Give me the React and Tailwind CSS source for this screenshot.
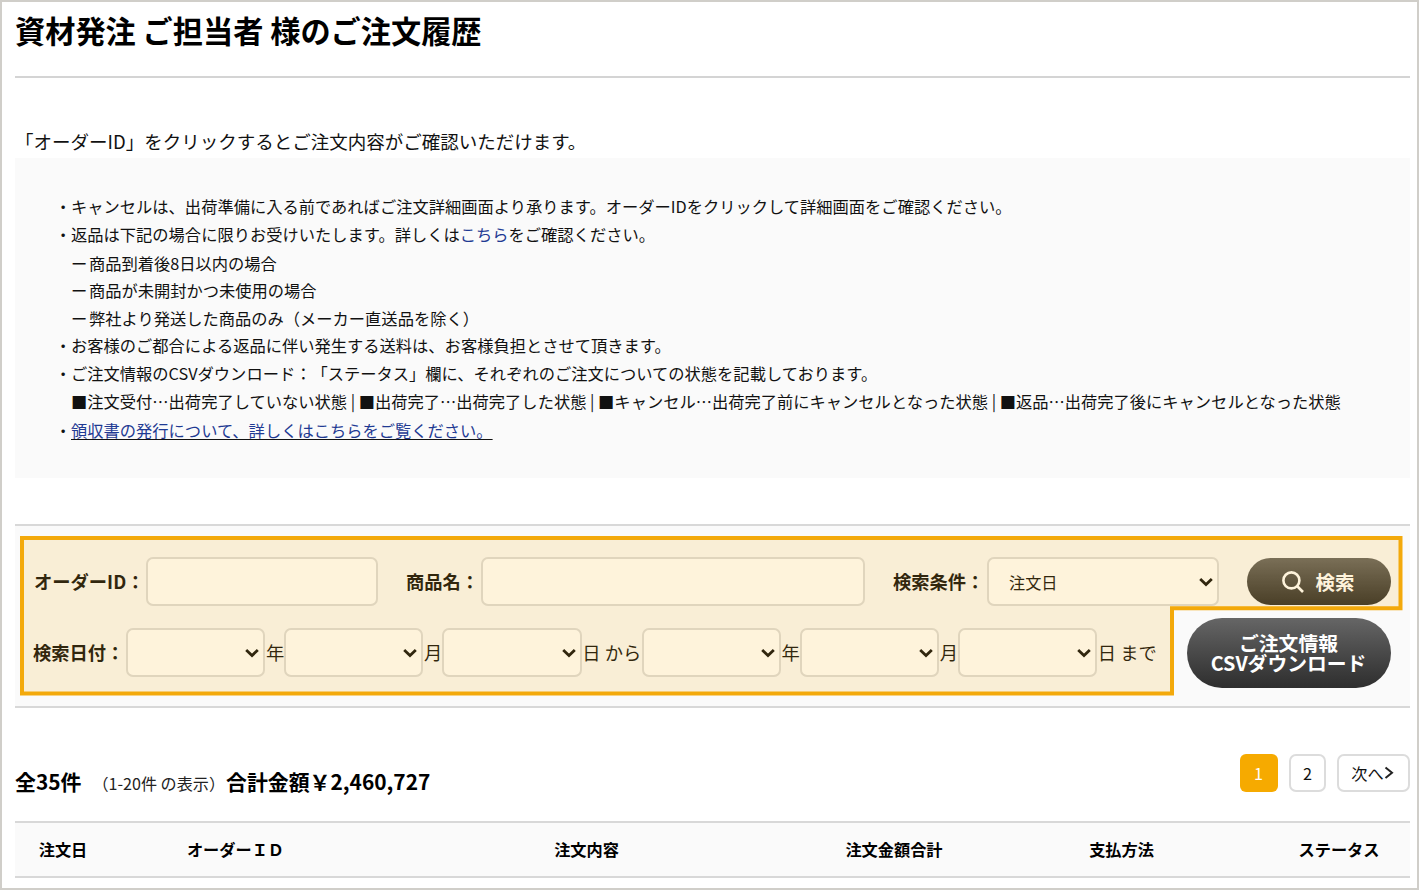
import React from "react";

const notes = [
  { text: "キャンセルは、出荷準備に入る前であればご注文詳細画面より承ります。オーダーIDをクリックして詳細画面をご確認ください。", bullet: true, height: "h-[28.4px]" },
  {
    text: (
      <>
        返品は下記の場合に限りお受けいたします。詳しくは
        <a href="#" className="text-[#1f3a93]">こちら</a>
        をご確認ください。
      </>
    ),
    bullet: true,
    height: "h-[28.6px]",
  },
  { text: "ー 商品到着後8日以内の場合", tight: true },
  { text: "ー 商品が未開封かつ未使用の場合", tight: true },
  { text: "ー 弊社より発送した商品のみ（メーカー直送品を除く）", tight: true },
  { text: "お客様のご都合による返品に伴い発生する送料は、お客様負担とさせて頂きます。", bullet: true },
  { text: "ご注文情報のCSVダウンロード：「ステータス」欄に、それぞれのご注文についての状態を記載しております。", bullet: true },
  {
    text: "■注文受付…出荷完了していない状態 | ■出荷完了…出荷完了した状態 | ■キャンセル…出荷完了前にキャンセルとなった状態 | ■返品…出荷完了後にキャンセルとなった状態",
    height: "h-[29.4px]",
  },
  {
    text: (
      <a href="#" className="text-[#1f3a93] underline decoration-[#111] decoration-1 underline-offset-[2px] [text-decoration-skip-ink:none]">
        領収書の発行について、詳しくはこちらをご覧ください。
      </a>
    ),
    bullet: true,
  },
];

const dateFields = [
  { unit: "年", width: "w-[19px]" },
  { unit: "月", width: "w-[19px]" },
  { unit: "日 から", width: "w-[60px]" },
  { unit: "年", width: "w-[19px]" },
  { unit: "月", width: "w-[19px]" },
  { unit: "日 まで", width: "w-[60px]" },
];

const columns = [
  { label: "注文日", width: "w-[96px]" },
  { label: "オーダーＩＤ", width: "w-[249px]" },
  { label: "注文内容", width: "w-[453px]" },
  { label: "注文金額合計", width: "w-[162px]" },
  { label: "支払方法", width: "w-[293px]" },
  { label: "ステータス", width: "w-[142px]" },
];

const Chevron = () => (
  <svg width="14" height="10" viewBox="0 0 14 10" fill="none" className="shrink-0">
    <path d="M1.2 2L7 7.5 12.8 2" stroke="#111" strokeWidth="2.8" />
  </svg>
);

const SelectBox = ({ value, width = "w-[139.2px]" }) => (
  <button className={`${width} h-[49px] shrink-0 flex items-center justify-between rounded-[7px] border-2 border-[#dcdcdc] bg-white pl-5 pr-1 text-[16.2px]`}>
    <span className="pt-0.5">{value}</span>
    <Chevron />
  </button>
);

const TextBox = ({ width, label }) => (
  <input
    type="text"
    aria-label={label}
    className={`${width} h-[49px] shrink-0 rounded-[7px] border-2 border-[#dcdcdc] bg-white px-3`}
  />
);

// L-shaped frame around the search fields, leaving the CSV button outside
const Highlight = () => (
  <svg className="absolute left-0 top-0 pointer-events-none" width="1395" height="184" viewBox="0 0 1395 184">
    <path
      d="M7 12H1385.5V82.3H1157V167.5H7Z"
      fill="#f5a800"
      fillOpacity="0.14"
    />
    <path d="M7 12H1385.5V82.3H1157V167.5H7Z" fill="none" stroke="#f3a90b" strokeWidth="4" />
  </svg>
);

export default function App() {
  return (
    <div
      lang="ja"
      className="w-[1419px] h-[890px] overflow-hidden border-2 border-[#d0cec9] bg-white pl-[13px] pr-[7px] text-[#111] whitespace-nowrap font-['Noto_Sans_CJK_JP','Noto_Sans',sans-serif] [text-spacing-trim:space-all]"
    >
      <h1 className="h-[76px] border-b-2 border-[#d4d4d4] pt-[6px] text-[30.2px] leading-[44px] font-bold text-black">
        資材発注 ご担当者 様のご注文履歴
      </h1>

      <p className="h-[80px] pt-[48px] text-[18.5px] leading-[30px]">
        「オーダーID」をクリックするとご注文内容がご確認いただけます。
      </p>

      <ul className="h-[320px] bg-[#fafafa] pt-[34px] pl-10 text-[16.28px]">
        {notes.map((note, idx) => (
          <li key={idx} className={`flex items-center ${note.height || "h-[27.6px]"}`}>
            <span className="w-4 flex justify-center">{note.bullet && "・"}</span>
            <span className={note.tight ? "[word-spacing:-2px]" : ""}>{note.text}</span>
          </li>
        ))}
      </ul>

      <section className="relative mt-[46px] h-[184px] border-y-2 border-[#d8d8d8] bg-[#fafafa] pt-[31px] text-[18.3px]">
        <div className="flex items-center">
          <label className="w-[131px] pl-[19px] font-bold">オーダーID：</label>
          <TextBox width="w-[232px]" label="オーダーID" />
          <label className="w-[103px] pl-7 font-bold">商品名：</label>
          <TextBox width="w-[384px]" label="商品名" />
          <label className="w-[122px] pl-7 font-bold">検索条件：</label>
          <SelectBox value="注文日" width="w-[232px]" />
          <button className="ml-7 w-[144px] h-[47px] pr-0.5 flex items-center justify-center gap-3 rounded-full bg-linear-to-b from-[#666] to-[#2e2e2e] text-[19.4px] font-bold text-white">
            <svg width="22" height="22" viewBox="0 0 22 22" fill="none" stroke="#fff" strokeWidth="2.6">
              <circle cx="9.4" cy="9.4" r="8" />
              <path d="M15 15l6 6" />
            </svg>
            検索
          </button>
        </div>

        <div className="flex items-center mt-[11px] h-[71px]">
          <label className="w-[111px] pl-[18px] font-bold">検索日付：</label>
          {dateFields.map((field, idx) => (
            <React.Fragment key={idx}>
              <SelectBox />
              <span className={`${field.width} shrink-0 pl-[0.7px]`}>{field.unit}</span>
            </React.Fragment>
          ))}
          <button className="ml-auto mr-[19px] w-[204px] h-[70px] pr-px rounded-full bg-linear-to-b from-[#666] to-[#2e2e2e] text-[19.8px] leading-5 font-bold text-white">
            <span className="block">ご注文情報</span>
            <span className="block">CSVダウンロード</span>
          </button>
        </div>
        <Highlight />
      </section>

      <div className="h-[113px] flex justify-between">
        <p className="pt-[56px] leading-[34px] text-[20.9px] font-bold text-black">
          全35件
          <span className="ml-[11px] mr-[1px] text-[16.1px] font-normal text-[#222]">（1-20件 の表示）</span>
          合計金額￥2,460,727
        </p>
        <nav className="flex pt-[46px] text-[16.2px]">
          <button className="w-[38px] h-[38px] pr-px rounded-md bg-[#f6aa00] text-white">1</button>
          <button className="ml-[11px] w-[37px] h-[38px] rounded-[7px] border-2 border-[#dcdcdc]">2</button>
          <button className="ml-[11px] w-[73px] h-[38px] pr-0.5 flex items-center justify-center rounded-[7px] border-2 border-[#dcdcdc]">
            次へ
            <svg width="10" height="14" viewBox="0 0 10 14" fill="none" stroke="#222" strokeWidth="2">
              <path d="M1.5 1.5L8 6.8l-6.5 5.2" />
            </svg>
          </button>
        </nav>
      </div>

      <div className="h-[57px] flex items-center border-y-2 border-[#d8d8d8] bg-[#fafafa] text-[16.2px] font-bold text-black">
        {columns.map((column) => (
          <div key={column.label} className={`${column.width} shrink-0 text-center`}>
            {column.label}
          </div>
        ))}
      </div>
    </div>
  );
}
